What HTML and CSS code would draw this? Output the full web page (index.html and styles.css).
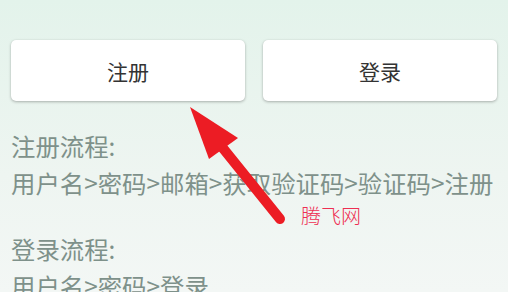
FILE: index.html
```html
<!DOCTYPE html>
<html lang="zh-CN">
<head>
<meta charset="utf-8">
<link rel="stylesheet" href="styles.css">
</head>
<body>
<div class="page">
  <div class="actions">
    <button class="btn">注册</button>
    <button class="btn">登录</button>
  </div>
  <div class="flow">
    <p class="line">注册流程:</p>
    <p class="line">用户名&gt;密码&gt;邮箱&gt;获取验证码&gt;验证码&gt;注册</p>
  </div>
  <div class="flow flow-second">
    <p class="line">登录流程:</p>
    <p class="line">用户名&gt;密码&gt;登录</p>
  </div>
  <svg class="arrow" width="508" height="292" viewBox="0 0 508 292">
    <line x1="222" y1="147" x2="280" y2="219" stroke="#ec1c24" stroke-width="10" stroke-linecap="round"/>
    <polygon points="190,107 209,159 238,138" fill="#ec1c24"/>
  </svg>
  <div class="mark">腾飞网</div>
</div>
</body>
</html>
```

FILE: styles.css
```css
html, body {
  margin: 0;
  padding: 0;
}
body {
  width: 508px;
  height: 292px;
  overflow: hidden;
  background: linear-gradient(180deg, #e3f3eb 0%, #eef5f1 60%, #f3f7f5 100%);
  font-family: "Noto Sans CJK SC", "Noto Sans", sans-serif;
}
.page {
  position: relative;
  height: 292px;
  padding: 40px 11px 0 11px;
  box-sizing: border-box;
}
.actions {
  display: flex;
  gap: 18px;
}
.btn {
  flex: 1;
  height: 61px;
  border: none;
  border-radius: 5px;
  background: #ffffff;
  box-shadow: 0 1px 3px rgba(0, 0, 0, 0.28), 0 0 1px rgba(0, 0, 0, 0.08);
  font-family: "Noto Sans CJK SC", sans-serif;
  font-size: 21px;
  color: #333333;
  padding: 0;
}
.flow {
  margin-top: 26px;
}
.flow-second {
  margin-top: 29px;
}
.line {
  margin: 0;
  font-size: 24.4px;
  line-height: 37px;
  color: #7e918a;
  white-space: nowrap;
}
.arrow {
  position: absolute;
  left: 0;
  top: 0;
}
.mark {
  position: absolute;
  left: 301px;
  top: 202px;
  font-size: 20px;
  line-height: 28px;
  color: #ee2f52;
  font-weight: 300;
}
```
